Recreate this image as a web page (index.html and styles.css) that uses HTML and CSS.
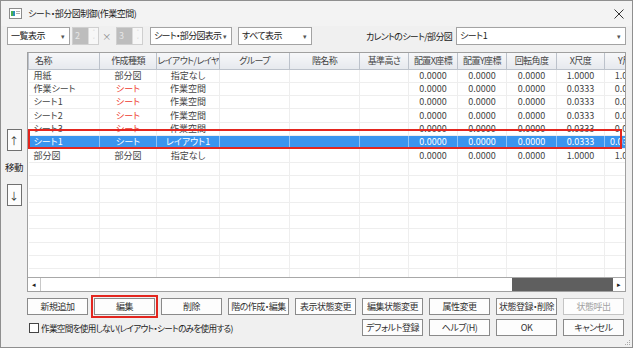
FILE: index.html
```html
<!DOCTYPE html>
<html lang="ja">
<head>
  <meta charset="UTF-8">
  <title>シート・部分図制御(作業空間)</title>
  <link rel="stylesheet" href="styles.css">
</head>
<body>
  <div class="window">
    <div class="titlebar">
      <svg class="app-icon" width="13" height="11" viewBox="0 0 13 11">
        <rect x="0.5" y="0.5" width="12" height="10" fill="#fff" stroke="#8c8c8c"/>
        <rect x="2" y="3" width="4" height="5" fill="#2f8fb8"/>
        <rect x="2" y="3" width="2" height="5" fill="#4caf50"/>
        <rect x="7" y="3" width="4" height="1" fill="#b0b0b0"/>
        <rect x="7" y="5" width="4" height="1" fill="#b0b0b0"/>
      </svg>
      <span class="title">シート・部分図制御(作業空間)</span>
      <svg class="close" width="10" height="10" viewBox="0 0 10 10">
        <path d="M0.5 0.5 L9.5 9.5 M9.5 0.5 L0.5 9.5" stroke="#333" stroke-width="1"/>
      </svg>
    </div>

    <div class="toolbar">
      <div class="combo combo-list">一覧表示<span class="arrow">▾</span></div>
      <div class="spin"><span class="spin-value">2</span><span class="spin-buttons"><i>˄</i><i>˅</i></span></div>
      <span class="times">×</span>
      <div class="spin"><span class="spin-value">3</span><span class="spin-buttons"><i>˄</i><i>˅</i></span></div>
      <div class="combo combo-kind">シート・部分図表示<span class="arrow">▾</span></div>
      <div class="combo combo-all">すべて表示<span class="arrow">▾</span></div>
      <span class="current-label">カレントのシート/部分図</span>
      <div class="combo combo-current">シート1<span class="arrow">▾</span></div>
    </div>

    <div class="content">
      <div class="side">
        <button class="move">↑</button>
        <span class="move-label">移動</span>
        <button class="move">↓</button>
      </div>

      <div class="grid">
        <div class="grid-view">
          <table class="sheet-table">
            <colgroup>
              <col style="width:71px"><col style="width:57px"><col style="width:63px"><col style="width:70px">
              <col style="width:70px"><col style="width:49px"><col style="width:49px"><col style="width:49px">
              <col style="width:50px"><col style="width:48px"><col style="width:48px">
            </colgroup>
            <thead>
              <tr>
                <th class="left">名称</th><th>作成種類</th><th>レイアウト/レイヤ</th><th>グループ</th>
                <th>階名称</th><th>基準高さ</th><th>配置X座標</th><th>配置Y座標</th>
                <th>回転角度</th><th>X尺度</th><th>Y尺度</th>
              </tr>
            </thead>
            <tbody>
              <tr><td class="left">用紙</td><td>部分図</td><td>指定なし</td><td></td><td></td><td></td><td>0.0000</td><td>0.0000</td><td>0.0000</td><td>1.0000</td><td>1.0000</td></tr>
              <tr><td class="left">作業シート</td><td class="red">シート</td><td>作業空間</td><td></td><td></td><td></td><td>0.0000</td><td>0.0000</td><td>0.0000</td><td>0.0333</td><td>0.0333</td></tr>
              <tr><td class="left">シート1</td><td class="red">シート</td><td>作業空間</td><td></td><td></td><td></td><td>0.0000</td><td>0.0000</td><td>0.0000</td><td>0.0333</td><td>0.0333</td></tr>
              <tr><td class="left">シート2</td><td class="red">シート</td><td>作業空間</td><td></td><td></td><td></td><td>0.0000</td><td>0.0000</td><td>0.0000</td><td>0.0333</td><td>0.0333</td></tr>
              <tr><td class="left">シート3</td><td class="red">シート</td><td>作業空間</td><td></td><td></td><td></td><td>0.0000</td><td>0.0000</td><td>0.0000</td><td>0.0333</td><td>0.0333</td></tr>
              <tr class="selected"><td class="left">シート1</td><td>シート</td><td>レイアウト1</td><td></td><td></td><td></td><td>0.0000</td><td>0.0000</td><td>0.0000</td><td>0.0333</td><td class="left">0.0333</td></tr>
              <tr><td class="left">部分図</td><td>部分図</td><td>指定なし</td><td></td><td></td><td></td><td>0.0000</td><td>0.0000</td><td>0.0000</td><td>1.0000</td><td>1.0000</td></tr>
              <tr><td></td><td></td><td></td><td></td><td></td><td></td><td></td><td></td><td></td><td></td><td></td></tr>
              <tr><td></td><td></td><td></td><td></td><td></td><td></td><td></td><td></td><td></td><td></td><td></td></tr>
              <tr><td></td><td></td><td></td><td></td><td></td><td></td><td></td><td></td><td></td><td></td><td></td></tr>
              <tr><td></td><td></td><td></td><td></td><td></td><td></td><td></td><td></td><td></td><td></td><td></td></tr>
              <tr><td></td><td></td><td></td><td></td><td></td><td></td><td></td><td></td><td></td><td></td><td></td></tr>
              <tr><td></td><td></td><td></td><td></td><td></td><td></td><td></td><td></td><td></td><td></td><td></td></tr>
              <tr><td></td><td></td><td></td><td></td><td></td><td></td><td></td><td></td><td></td><td></td><td></td></tr>
              <tr><td></td><td></td><td></td><td></td><td></td><td></td><td></td><td></td><td></td><td></td><td></td></tr>
              <tr><td></td><td></td><td></td><td></td><td></td><td></td><td></td><td></td><td></td><td></td><td></td></tr>
            </tbody>
          </table>
          <!-- red marker around the selected row -->
          <div class="row-mark"></div>
        </div>
        <div class="hscroll">
          <span class="scroll-btn">◂</span>
          <span class="scroll-track"><span class="scroll-thumb"></span></span>
          <span class="scroll-btn">▸</span>
        </div>
      </div>
    </div>

    <div class="actions">
      <button>新規追加</button>
      <button class="marked">編集</button>
      <button>削除</button>
      <button>階の作成・編集</button>
      <button>表示状態変更</button>
      <button>編集状態変更</button>
      <button>属性変更</button>
      <button>状態登録・削除</button>
      <button disabled>状態呼出</button>

      <label class="workspace"><span class="checkbox"></span>作業空間を使用しない(レイアウト・シートのみを使用する)</label>
      <button>デフォルト登録</button>
      <button>ヘルプ(H)</button>
      <button>OK</button>
      <button>キャンセル</button>
    </div>

    <svg class="grip" width="8" height="8" viewBox="0 0 8 8">
      <rect x="6" y="2" width="1" height="1" fill="#aaa"/>
      <rect x="4" y="4" width="1" height="1" fill="#aaa"/>
      <rect x="6" y="4" width="1" height="1" fill="#aaa"/>
      <rect x="2" y="6" width="1" height="1" fill="#aaa"/>
      <rect x="4" y="6" width="1" height="1" fill="#aaa"/>
      <rect x="6" y="6" width="1" height="1" fill="#aaa"/>
    </svg>
  </div>
</body>
</html>
```

FILE: styles.css
```css
body {
  margin: 0;
  background: #ffffff;
  font-family: 'Noto Sans CJK JP', 'Noto Sans', sans-serif;
  font-size: 9px;
  letter-spacing: -0.5px;
  font-feature-settings: "palt";
  color: #333;
}

.window {
  position: relative;
  width: 633px;
  height: 348px;
  box-sizing: border-box;
  border: 1px solid #8f8f8f;
  background: #f0f0f0;
}

.titlebar {
  height: 25px;
  display: flex;
  align-items: center;
  padding: 0 7px 0 8px;
  background: #f3f3f3;
}

.app-icon {
  margin-right: 6px;
}

.title {
  flex: 1;
  font-size: 9px;
  color: #222;
}

.close {
  margin-right: 1px;
}

/* top toolbar */
.toolbar {
  display: flex;
  align-items: center;
  height: 18px;
  padding: 1px 6px 0 6px;
}

.combo {
  position: relative;
  height: 18px;
  box-sizing: border-box;
  border: 1px solid #a3a3a3;
  background: #fff;
  line-height: 16px;
  padding-left: 3px;
  color: #222;
  white-space: nowrap;
}

.combo .arrow {
  position: absolute;
  right: 5px;
  top: 0;
  font-size: 7px;
  color: #555;
}

.combo-list { width: 63px; }
.combo-kind { width: 82px; margin-left: 7px; letter-spacing: -0.7px; }
.combo-all { width: 74px; margin-left: 6px; }
.combo-current { width: 170px; }

.spin {
  display: flex;
  width: 27px;
  height: 18px;
  box-sizing: border-box;
  border: 1px solid #cfcfcf;
  margin-left: 2px;
}

.spin-value {
  width: 15px;
  background: #bdbdbd;
  color: #e6e6e6;
  line-height: 16px;
  padding-left: 2px;
  box-sizing: border-box;
}

.spin-buttons {
  flex: 1;
  display: flex;
  flex-direction: column;
  background: #f7f7f7;
  border-left: 1px solid #dcdcdc;
}

.spin-buttons i {
  flex: 1;
  font-style: normal;
  font-size: 6px;
  line-height: 8px;
  text-align: center;
  color: #b8b8b8;
}

.times {
  width: 15px;
  text-align: center;
  color: #888;
}

.current-label {
  margin-left: auto;
  margin-right: 4px;
  letter-spacing: -0.7px;
  color: #222;
}

/* list area */
.content {
  display: flex;
  height: 240px;
  margin-top: 7px;
}

.side {
  width: 26px;
  display: flex;
  flex-direction: column;
  align-items: center;
  padding-top: 77px;
  box-sizing: border-box;
}

.move {
  width: 15px;
  height: 22px;
  padding: 0;
  border: 1px solid #707070;
  background: #fdfdfd;
  font-family: 'Noto Sans CJK JP', sans-serif;
  font-size: 10px;
  color: #333;
}

.move-label {
  margin: 9px 0 10px 0;
  font-size: 9.5px;
  color: #222;
}

.grid {
  width: 599px;
  display: flex;
  flex-direction: column;
  border: 1px solid #a0a0a0;
  background: #fff;
  box-sizing: border-box;
}

.grid-view {
  position: relative;
  flex: 1;
  overflow: hidden;
}

.sheet-table {
  table-layout: fixed;
  width: 624px;
  border-collapse: collapse;
}

.sheet-table th {
  height: 16px;
  padding: 0;
  box-sizing: border-box;
  background: linear-gradient(#f6f7f9, #e6e9ee);
  border: 1px solid #bcc2cb;
  border-top: none;
  font-weight: normal;
  letter-spacing: -0.6px;
  color: #444;
  white-space: nowrap;
  overflow: hidden;
}

.sheet-table td {
  height: 13.33px;
  padding: 0 3px;
  box-sizing: border-box;
  border-right: 1px solid #eeeeee;
  border-bottom: 1px solid #eeeeee;
  text-align: center;
  line-height: 12px;
  color: #444;
  letter-spacing: 0;
  white-space: nowrap;
  overflow: hidden;
}

.sheet-table .left {
  text-align: left;
  padding-left: 5px;
}

.sheet-table th.left {
  padding-left: 6px;
}

.sheet-table td.red {
  color: #ee3b30;
}

.sheet-table tr.selected td {
  background: #3a95ef;
  color: #fff;
  border-right-color: #8fc3f7;
}

.row-mark {
  position: absolute;
  left: 0;
  top: 76px;
  width: 594px;
  height: 20px;
  box-sizing: border-box;
  border: 2px solid #e3261f;
  pointer-events: none;
}

.hscroll {
  display: flex;
  height: 13px;
  border-top: 1px solid #a8a8a8;
  background: #fff;
}

.scroll-btn {
  width: 12px;
  font-size: 7px;
  line-height: 12px;
  text-align: center;
  color: #222;
}

.scroll-btn:first-child {
  border-right: 1px solid #c8c8c8;
}

.scroll-track {
  flex: 1;
  display: flex;
  justify-content: flex-end;
}

.scroll-thumb {
  width: 101px;
  background: #5f5f5f;
}

/* bottom buttons */
.actions {
  display: grid;
  grid-template-columns: repeat(9, 61px);
  column-gap: 6px;
  row-gap: 4px;
  padding: 6px 0 0 26px;
}

.actions button {
  height: 17px;
  padding: 0;
  border: 1px solid #8a8a8a;
  background: #fdfdfd;
  font-family: 'Noto Sans CJK JP', sans-serif;
  font-feature-settings: "palt";
  font-size: 9px;
  letter-spacing: -0.5px;
  color: #333;
  white-space: nowrap;
}

.actions button:disabled {
  border-color: #c4c4c4;
  color: #a2a2a2;
}

.actions button.marked {
  outline: 2px solid #e3261f;
  outline-offset: 1px;
}

.workspace {
  grid-column: 1 / 6;
  display: flex;
  align-items: center;
  padding-left: 2px;
  font-size: 8.6px;
  letter-spacing: -0.7px;
  color: #222;
}

.checkbox {
  width: 8px;
  height: 8px;
  border: 1px solid #444;
  background: #fff;
  margin-right: 2px;
}

.grip {
  position: absolute;
  right: 1px;
  bottom: 1px;
}
```
